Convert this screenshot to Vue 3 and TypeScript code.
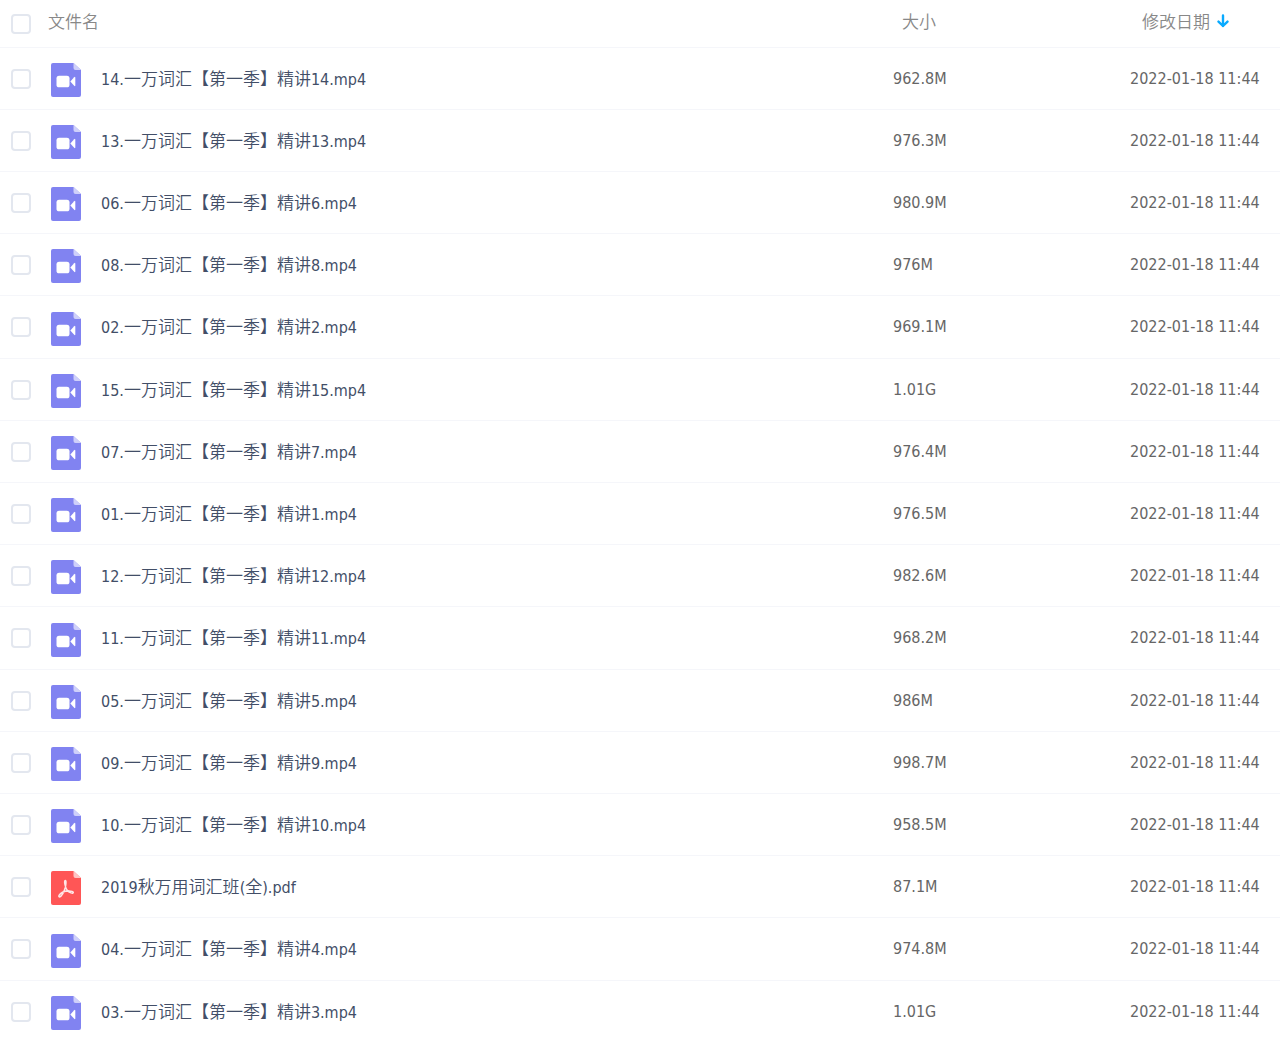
<script setup lang="ts">
import { computed, ref } from 'vue'

interface FileEntry {
  name: string
  size: string
  kind: 'video' | 'pdf'
}

const MODIFIED = '2022-01-18 11:44'

const lessons: [string, string, string][] = [
  ['14', '14', '962.8M'],
  ['13', '13', '976.3M'],
  ['06', '6', '980.9M'],
  ['08', '8', '976M'],
  ['02', '2', '969.1M'],
  ['15', '15', '1.01G'],
  ['07', '7', '976.4M'],
  ['01', '1', '976.5M'],
  ['12', '12', '982.6M'],
  ['11', '11', '968.2M'],
  ['05', '5', '986M'],
  ['09', '9', '998.7M'],
  ['10', '10', '958.5M'],
  ['04', '4', '974.8M'],
  ['03', '3', '1.01G'],
]

const files: FileEntry[] = lessons.map(([prefix, no, size]) => ({
  name: `${prefix}.一万词汇【第一季】精讲${no}.mp4`,
  size,
  kind: 'video',
}))
files.splice(13, 0, { name: '2019秋万用词汇班(全).pdf', size: '87.1M', kind: 'pdf' })

// Latin runs are set one size smaller than the Chinese text beside them.
const runs = (name: string): string[] => name.match(/[\x00-\x7f]+|[^\x00-\x7f]+/g) ?? []
const isLatin = (run: string): boolean => run.charCodeAt(0) < 128

const selected = ref<string[]>([])
const allSelected = computed({
  get: () => selected.value.length === files.length,
  set: (on: boolean) => {
    selected.value = on ? files.map((f) => f.name) : []
  },
})
</script>

<template>
  <main class="file-list">
    <table>
      <thead>
        <tr>
          <th class="pick"><input v-model="allSelected" type="checkbox" aria-label="全选" /></th>
          <th class="name">文件名</th>
          <th class="size">大小</th>
          <th class="date">
            <span class="sort">
              修改日期
              <svg width="12" height="14" viewBox="0 0 12 14" aria-hidden="true">
                <path d="M6 1.5V12M1.5 7.6L6 12L10.5 7.6" fill="none" stroke="#09aaff" stroke-width="2.4" stroke-linecap="round" stroke-linejoin="round" />
              </svg>
            </span>
          </th>
        </tr>
      </thead>
      <tbody>
        <tr v-for="(file, i) in files" :key="file.name">
          <td class="pick">
            <input :id="`file-${i}`" v-model="selected" type="checkbox" :value="file.name" />
          </td>
          <td class="name">
            <label class="entry" :for="`file-${i}`">
              <svg class="icon" width="30" height="34" viewBox="0 0 30 34" aria-hidden="true">
                <template v-if="file.kind === 'video'">
                  <path d="M2 0H22.5L30 7V32Q30 34 28 34H2Q0 34 0 32V2Q0 0 2 0Z" fill="#8183f1" />
                  <path d="M22.5 0L30 7H24.5Q22.5 7 22.5 5Z" fill="#cfd0fa" />
                  <rect x="5.5" y="12.7" width="13" height="11.6" rx="2.6" fill="#fff" />
                  <path d="M19.3 18.5L23.2 14.2Q24.3 13.3 24.3 14.7V22.3Q24.3 23.7 23.2 22.8Z" fill="#fff" />
                </template>
                <template v-else>
                  <path d="M2 0H22.5L30 7V32Q30 34 28 34H2Q0 34 0 32V2Q0 0 2 0Z" fill="#ff5656" />
                  <path d="M22.5 0L30 7H24.5Q22.5 7 22.5 5Z" fill="#ffc4c4" />
                  <path d="M14.2 9.5C15.6 9.5 14.8 14 14.4 16.2C13.3 20.5 10.5 25.5 8.6 25.9C6.8 26 8.4 22.800 11.5 21.3C15 19.7 21.5 19.6 22.3 21.3C22.5 23.3 18 21.5 16.2 19.3C14.2 16.8 12.8 9.5 14.2 9.5Z" fill="none" stroke="#ffe6e6" stroke-width="1.5" stroke-linejoin="round" />
                </template>
              </svg>
              <span><span v-for="(run, r) in runs(file.name)" :key="r" :class="{ latin: isLatin(run) }">{{ run }}</span></span>
            </label>
          </td>
          <td class="size">{{ file.size }}</td>
          <td class="date">{{ MODIFIED }}</td>
        </tr>
      </tbody>
    </table>
  </main>
</template>

<style>
body {
  margin: 0;
  background: #fff;
}
</style>

<style scoped>
.file-list {
  max-height: 100vh;
  overflow: auto;
  scrollbar-width: none;
  font-family: "DejaVu Sans Condensed", "Noto Sans CJK SC", sans-serif;
  font-size: 16px;
  line-height: 24px;
  color: #666;
}

table {
  width: 100%;
  table-layout: fixed;
  border-collapse: separate;
  border-spacing: 0;
}

th,
td {
  box-sizing: border-box;
  height: 62px;
  padding: 0;
  border-bottom: 1px solid #f5f6fa;
  text-align: left;
  font-weight: 400;
  white-space: nowrap;
  vertical-align: middle;
}

tbody tr:nth-child(5n) td {
  height: 63px;
}

th {
  height: 48px;
  padding-bottom: 5px;
  color: #888;
  font-family: "Noto Sans CJK SC", sans-serif;
  font-size: 17px;
  font-weight: 350;
}

.pick {
  width: 48px;
  padding: 0 0 0 11px;
}

.size {
  width: 237px;
}

.date {
  width: 150px;
}

th.size {
  padding-left: 9px;
}

th.date {
  padding-left: 12px;
}

.sort {
  display: flex;
  align-items: center;
  gap: 7px;
}

input {
  display: block;
  appearance: none;
  box-sizing: border-box;
  width: 20px;
  height: 20px;
  margin: 0;
  border: 2px solid #e3e7ef;
  border-radius: 4px;
  background: #fff;
}

input:checked {
  border-color: #09aaff;
  background: #09aaff;
}

.entry {
  display: flex;
  align-items: center;
  gap: 20px;
  padding-left: 3px;
  color: #424e67;
  font-family: "Noto Sans CJK SC", sans-serif;
  font-size: 17px;
  font-weight: 350;
}

.icon {
  flex: none;
  margin-top: 3px;
}

.latin {
  font-family: "DejaVu Sans Condensed", "Noto Sans", sans-serif;
  font-size: 16px;
  font-weight: 400;
}
</style>
